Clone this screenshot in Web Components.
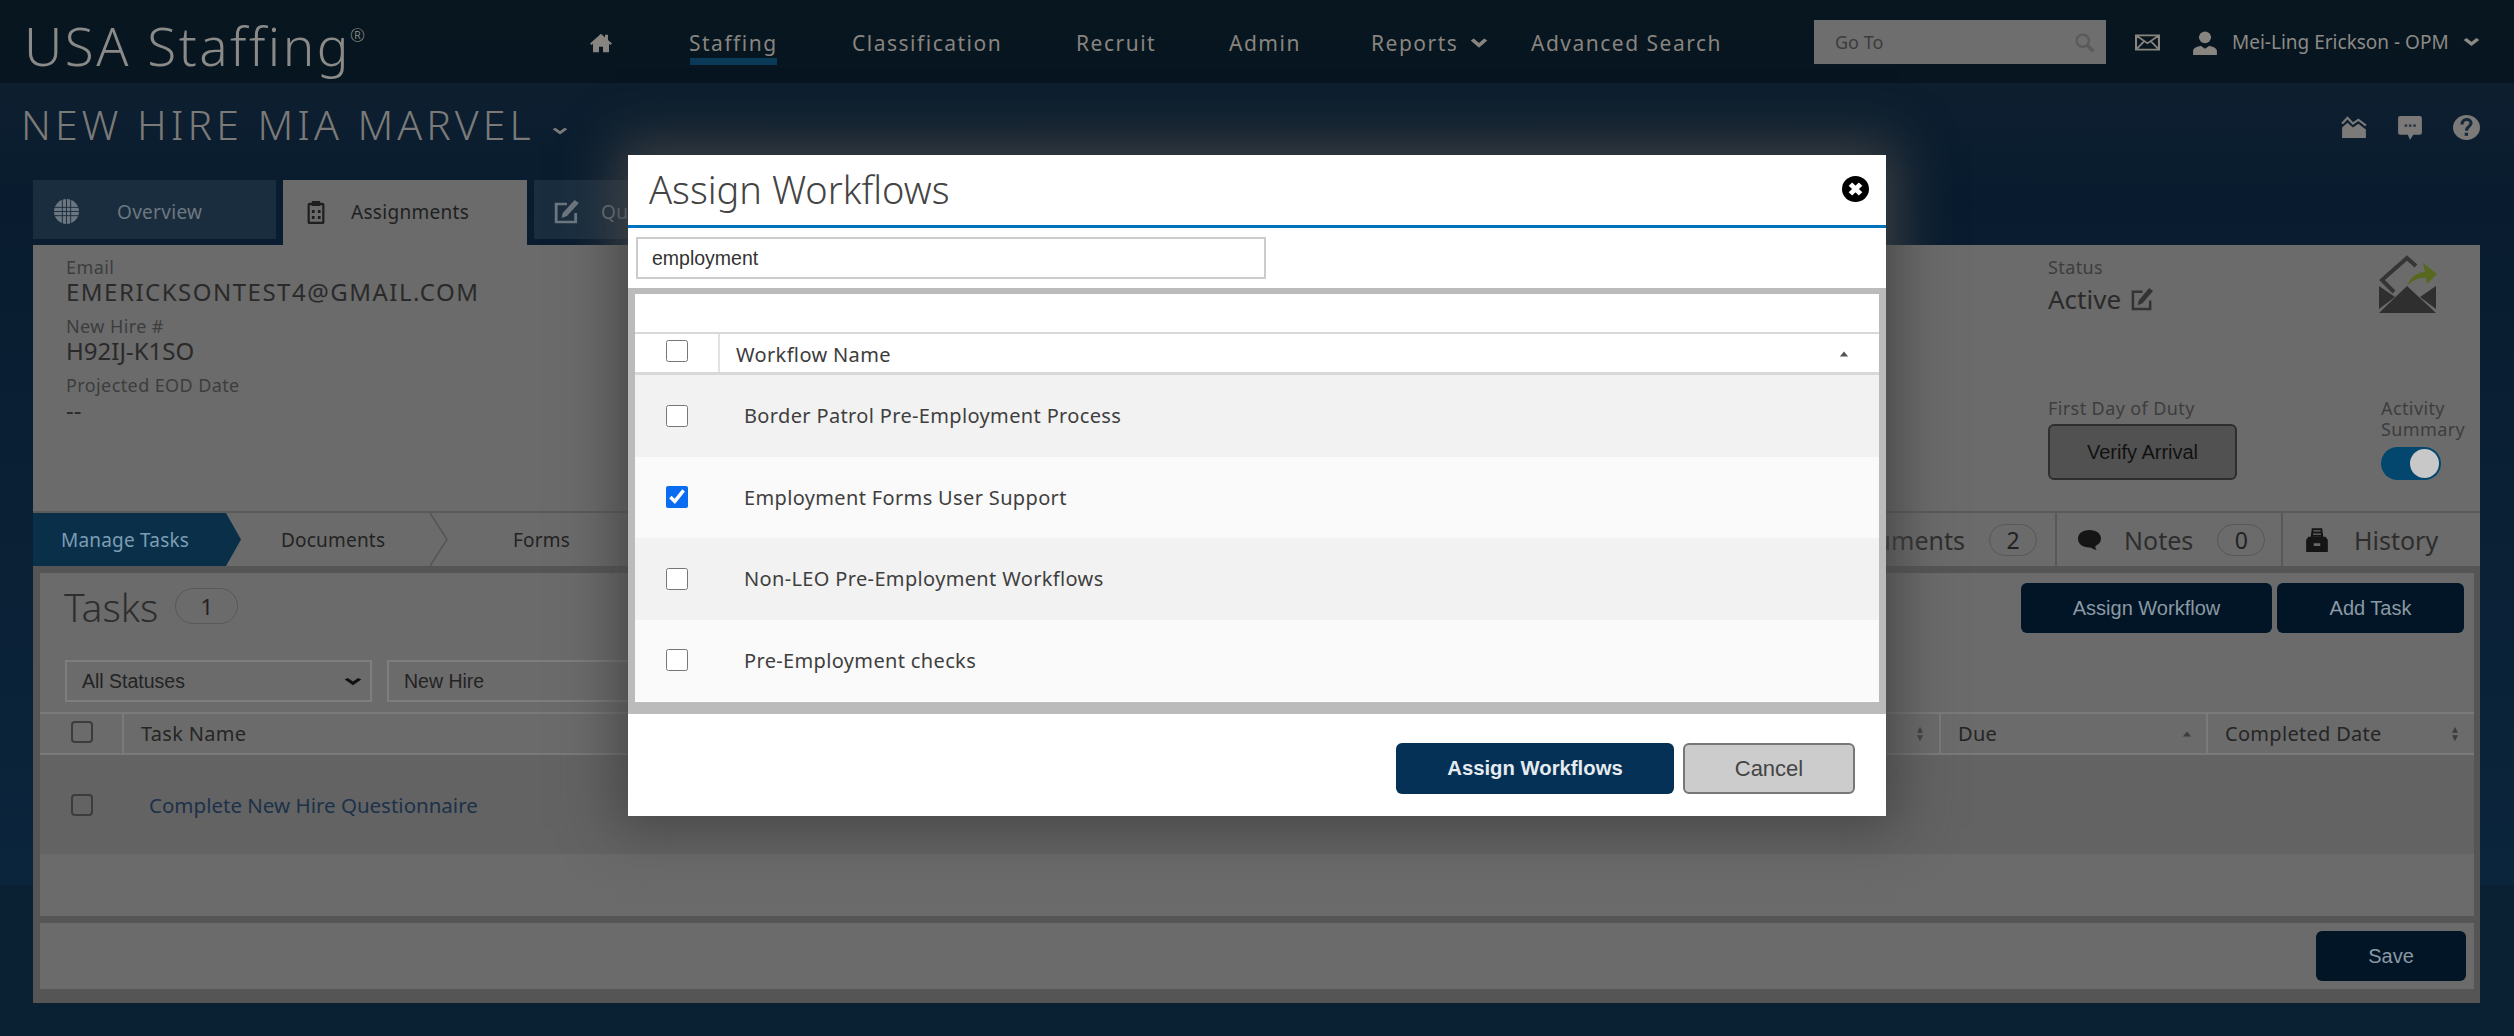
<!doctype html>
<html>
<head>
<meta charset="utf-8">
<title>USA Staffing</title>
<style>
  html, body { margin: 0; padding: 0; }
  body {
    width: 2514px;
    height: 1036px;
    overflow: hidden;
    position: relative;
    font-family: "Noto Sans", "Open Sans", sans-serif;
    background: linear-gradient(#0d1f2f 83px, #091c2f 200px, #0b253c 885px, #0a2033 885px);
  }
</style>
</head>
<body>
  <usa-header></usa-header>
  <hire-title></hire-title>
  <page-tabs></page-tabs>
  <hire-panel></hire-panel>
  <assign-modal></assign-modal>

<script>
const ICONS = {
  home: '<path fill="currentColor" d="M12 2 1 12.5l1.6 1.6L4 12.8V22h6v-6h4v6h6v-9.2l1.4 1.3 1.6-1.6L19 8.7V3h-3v2.9z"/>',
  chev: '<path fill="none" stroke="currentColor" stroke-width="5.500" d="M3 6l9 10 9-10"/>',
  search: '<circle cx="10" cy="10" r="7" fill="none" stroke="currentColor" stroke-width="2.6"/><path stroke="currentColor" stroke-width="4" d="M15 15l7 7"/>',
  mail: '<path fill="none" stroke="currentColor" stroke-width="2" d="M1 3h22v18H1zM1 3l11 10L23 3M1 21l8-11M23 21l-8-11"/>',
  user: '<circle cx="12" cy="7" r="5.6" fill="currentColor"/><path fill="currentColor" d="M1 24v-4c0-3 4-4 7-5l4 3 4-3c3 1 7 2 7 5v4z"/>',
  crown: '<path fill="none" stroke="currentColor" stroke-width="2.2" d="M1 9l5-6 5 6 5-4 7 6"/><path fill="currentColor" d="M1 13l5-5 5 5 5-4 7 6v9H1z"/>',
  comment: '<path fill="currentColor" d="M3 1h18a2 2 0 0 1 2 2v14a2 2 0 0 1-2 2h-6l-3 5-2-5H3a2 2 0 0 1-2-2V3a2 2 0 0 1 2-2z"/><g fill="#2b3a47"><rect x="7" y="9" width="2.4" height="2.4"/><rect x="11" y="9" width="2.4" height="2.4"/><rect x="15" y="9" width="2.4" height="2.4"/></g>',
  help: '<circle cx="12" cy="12" r="12" fill="currentColor"/><path fill="none" stroke="#16293a" stroke-width="2.8" d="M8 9c0-6 8-6 8-1 0 3-4 3-4 7"/><rect x="10.4" y="17" width="3" height="3" fill="#16293a"/>',
  globe: '<circle cx="12" cy="12" r="12" fill="currentColor"/><path fill="none" stroke="#1a2d3e" stroke-width=".9" d="M0 8h24M0 12h24M0 16h24M8 0v24M12 0v24M16 0v24"/>',
  clip: '<path fill="none" stroke="currentColor" stroke-width="2.4" d="M5 4h14a1 1 0 0 1 1 1v17a1 1 0 0 1-1 1H5a1 1 0 0 1-1-1V5a1 1 0 0 1 1-1z"/><rect x="7.500" y="1" width="9" height="5" fill="currentColor"/><g fill="currentColor"><rect x="7.500" y="10" width="3" height="3"/><rect x="14" y="10" width="3" height="3"/><rect x="7.500" y="16" width="3" height="3"/><rect x="14" y="16" width="3" height="3"/></g>',
  edit: '<path fill="none" stroke="currentColor" stroke-width="2.6" d="M20 13v9H2V4h10"/><path fill="currentColor" d="M19 0l4 3-11 13-5 2 1-5z"/>',
  note: '<path fill="currentColor" d="M12 1C5 1 1 5 1 11c0 6 4 10 11 10 2 0 3 2 7 3-1-2-2-3-1-5 3-2 5-4 5-8 0-6-4-10-11-10z"/>',
  archive: '<path fill="none" stroke="currentColor" stroke-width="1.8" d="M7 10l1-8h8l1 8M8.500 5h7M8 8h8"/><path fill="currentColor" d="M4 9h16l2 3v11H2V12z"/><rect x="9" y="15" width="6" height="2.500" fill="#6b6b6b"/>',
  close: '<circle cx="12" cy="12" r="12" fill="#000"/><path stroke="#fff" stroke-width="4.400" d="M7.500 7.500l9 9M16.500 7.500l-9 9"/>',
  up: '<path fill="currentColor" d="M12 2l10 20H2z"/>',
  both: '<path fill="currentColor" d="M12 1l7 9H5zM12 23l7-9H5z"/>'
}

class UiIcon extends HTMLElement {
  connectedCallback() {
    const size = this.getAttribute('size') || 24
    const h = this.getAttribute('h') || size
    this.attachShadow({ mode: 'open' }).innerHTML = `
      <style>
        :host { display: inline-flex; flex: none; width: ${size}px; height: ${h}px; }
        svg { width: 100%; height: 100%; display: block; }
      </style>
      <svg viewBox="0 0 24 24" preserveAspectRatio="none">${ICONS[this.getAttribute('name')]}</svg>`
  }
}
customElements.define('ui-icon', UiIcon)

class UsaHeader extends HTMLElement {
  constructor() {
    super()
    this.attachShadow({ mode: 'open' }).innerHTML = `
      <style>
        :host {
          display: grid;
          height: 83px;
          align-items: center;
          grid-template-columns: 589px 100px 163px 224px 153px 142px 160px 283px 321px 57px 40px 1fr;
          background: linear-gradient(#07161f, #06151f);
          color: #88847f;
          font-size: 21px;
          letter-spacing: 1.500px;
        }
        .logo { padding-left: 24px; font-size: 53px; font-weight: 300; color: #8a8a88; letter-spacing: 2.500px; line-height: 83px; margin-top: 4px; white-space: nowrap; }
        .logo sup { font-size: 18px; vertical-align: 24px; line-height: 0; letter-spacing: 0; margin-left: -1px; }
        .item { line-height: 30px; margin-top: -2px; display: flex; align-items: center; gap: 12px; white-space: nowrap; }
        .current { width: max-content; box-shadow: 0 8px 0 -1px #0a3a57; }
        .goto {
          width: 292px; height: 44px; box-sizing: border-box; margin-top: -3px;
          padding: 0 11px 0 21px; background: #6e6e6e; color: #3c3c3c;
          display: flex; align-items: center; justify-content: space-between;
          font-size: 18px; letter-spacing: 0;
        }
        .name { font-size: 19px; letter-spacing: 0; color: #8d8a86; display: flex; gap: 14px; align-items: center; margin-top: -3px; }
        .mail, .user { display: flex; margin-top: -2px; }
      </style>
      <div class="logo">USA Staffing<sup>®</sup></div>
      <div class="item"><ui-icon name="home" size="24" h="22"></ui-icon></div>
      <div class="item"><span class="current">Staffing</span></div>
      <div class="item">Classification</div>
      <div class="item">Recruit</div>
      <div class="item">Admin</div>
      <div class="item">Reports <ui-icon name="chev" size="18" h="14"></ui-icon></div>
      <div class="item">Advanced Search</div>
      <div class="goto">Go To <ui-icon name="search" size="21" h="21" style="color:#5a5a5a"></ui-icon></div>
      <div class="mail"><ui-icon name="mail" size="25" h="19"></ui-icon></div>
      <div class="user"><ui-icon name="user" size="26" h="25"></ui-icon></div>
      <div class="item name">Mei-Ling Erickson - OPM <ui-icon name="chev" size="17" h="12"></ui-icon></div>`
  }
}
customElements.define('usa-header', UsaHeader)

class HireTitle extends HTMLElement {
  constructor() {
    super()
    this.attachShadow({ mode: 'open' }).innerHTML = `
      <style>
        :host {
          display: flex;
          height: 97px;
          box-sizing: border-box;
          padding: 0 34px 0 21px;
          align-items: flex-start;
          color: #7b7a78;
        }
        h1 { margin: 16px 0 0; font-size: 41px; line-height: 50px; font-weight: 300; letter-spacing: 4px; white-space: nowrap; }
        .caret { margin: 43px 0 0 17px; }
        .tools { margin: 32px 0 0 auto; display: flex; gap: 30px; }
      </style>
      <h1>NEW HIRE MIA MARVEL</h1>
      <ui-icon class="caret" name="chev" size="16" h="10"></ui-icon>
      <div class="tools">
        <ui-icon name="crown" size="26" h="23"></ui-icon>
        <ui-icon name="comment" size="26" h="25"></ui-icon>
        <ui-icon name="help" size="27" h="25"></ui-icon>
      </div>`
  }
}
customElements.define('hire-title', HireTitle)

class TabLink extends HTMLElement {
  constructor() {
    super()
    this.attachShadow({ mode: 'open' }).innerHTML = `
      <style>
        :host {
          display: flex;
          align-items: center;
          box-sizing: border-box;
          height: 59px;
          padding-top: 4px;
          background: #1a2d3e;
          color: #6d7780;
          font-size: 19px;
          letter-spacing: .3px;
          white-space: nowrap;
          overflow: hidden;
        }
        :host([active]) { height: 65px; padding-bottom: 5px; background: #6b6b6b; color: #1f1f1f; }
      </style>
      <slot></slot>`
  }
}
customElements.define('tab-link', TabLink)

class PageTabs extends HTMLElement {
  constructor() {
    super()
    this.attachShadow({ mode: 'open' }).innerHTML = `
      <style>
        :host { display: flex; height: 65px; padding-left: 33px; gap: 7px; align-items: flex-start; }
      </style>
      <tab-link style="width:243px;padding-left:21px;gap:38px"><ui-icon name="globe" size="25" h="25" style="color:#6b7680"></ui-icon><span>Overview</span></tab-link>
      <tab-link active style="width:244px;padding-left:22px;gap:24px"><ui-icon name="clip" size="22" h="24"></ui-icon><span>Assignments</span></tab-link>
      <tab-link style="width:95px;padding-left:20px;gap:21px"><ui-icon name="edit" size="26" h="24"></ui-icon><span>Qu</span></tab-link>`
  }
}
customElements.define('page-tabs', PageTabs)

class LabelValue extends HTMLElement {
  constructor() {
    super()
    this.attachShadow({ mode: 'open' }).innerHTML = `
      <style>
        :host { display: block; height: 59px; color: #2a2a2a; }
        .l { font-size: 18px; letter-spacing: .4px; line-height: 24px; color: #3d3d3d; white-space: nowrap; }
        .v { font-size: var(--v-size, 24px); letter-spacing: var(--v-ls, 0); line-height: 35px; display: flex; gap: 10px; align-items: center; white-space: nowrap; margin-top: var(--v-top, -5px); }
      </style>
      <div class="l"><slot name="label"></slot></div>
      <div class="v"><slot></slot></div>`
  }
}
customElements.define('label-value', LabelValue)

class HireSummary extends HTMLElement {
  constructor() {
    super()
    this.attachShadow({ mode: 'open' }).innerHTML = `
      <style>
        :host {
          display: flex;
          justify-content: space-between;
          height: 268px;
          box-sizing: border-box;
          padding: 10px 0 0 33px;
          background: #6b6b6b;
          border-bottom: 2px solid #5a5a5a;
        }
        .side { width: 432px; display: grid; grid-template-columns: 333px 99px; grid-template-rows: 143px 1fr; }
        .small { font-size: 18px; letter-spacing: .4px; line-height: 21px; color: #3d3d3d; white-space: nowrap; }
        .verify {
          width: 189px; height: 56px; box-sizing: border-box; margin-top: 5px;
          display: flex; align-items: center; justify-content: center;
          background: #515151; border: 2px solid #2e2e2e; border-radius: 6px;
          font: 20px "Liberation Sans", Arial, sans-serif; color: #111;
        }
        .toggle {
          width: 60px; height: 33px; box-sizing: border-box; margin-top: 7px; padding: 2px 0 2px 29px;
          background: #04476e; border-radius: 17px;
        }
        .knob { width: 29px; height: 29px; border-radius: 50%; background: #c8c8c8; }
        .mailicon { margin: 0 0 0 -2px; display: block; }
      </style>
      <div>
        <label-value style="--v-ls:1.500px"><span slot="label">Email</span>EMERICKSONTEST4@GMAIL.COM</label-value>
        <label-value><span slot="label">New Hire #</span>H92IJ-K1SO</label-value>
        <label-value><span slot="label">Projected EOD Date</span>--</label-value>
      </div>
      <div class="side">
        <label-value style="--v-top:3px;--v-size:26px"><span slot="label">Status</span>Active <ui-icon name="edit" size="23" h="23" style="color:#333"></ui-icon></label-value>
        <svg class="mailicon" width="58" height="59" viewBox="0 0 58 59">
          <path fill="none" stroke="#353535" stroke-width="4" d="M15 37 3 25 28 3l9 8"/>
          <path fill="#2f2f2f" d="M28 31 57 58H0zM0 31l16 11L0 54zM57 31 41 42l16 12z"/>
          <path fill="#56691f" d="M28 31c3-9 11-14 18-14l-2-9 14 11-10 10-1-6c-7-1-13 2-19 8z"/>
        </svg>
        <div>
          <div class="small">First Day of Duty</div>
          <div class="verify">Verify Arrival</div>
        </div>
        <div>
          <div class="small">Activity<br>Summary</div>
          <div class="toggle"><div class="knob"></div></div>
        </div>
      </div>`
  }
}
customElements.define('hire-summary', HireSummary)

class CountBadge extends HTMLElement {
  constructor() {
    super()
    this.attachShadow({ mode: 'open' }).innerHTML = `
      <style>
        :host {
          display: inline-flex; align-items: center; justify-content: center; flex: none;
          width: 48px; height: 32px; box-sizing: border-box;
          border: 1.500px solid #585858; border-radius: 16px;
          font-size: 23px; color: #222;
        }
      </style>
      <slot></slot>`
  }
}
customElements.define('count-badge', CountBadge)

class StepBar extends HTMLElement {
  constructor() {
    super()
    this.attachShadow({ mode: 'open' }).innerHTML = `
      <style>
        :host { display: flex; height: 53px; background: #6b6b6b; color: #232323; font-size: 19px; letter-spacing: .2px; white-space: nowrap; }
        .first {
          width: 208px; box-sizing: border-box; padding-left: 28px;
          display: flex; align-items: center;
          background: #0a3049; color: #7c9db5;
          clip-path: polygon(0 0, 193px 0, 100% 50%, 193px 100%, 0 100%);
        }
        .step { display: flex; align-items: center; width: 207px; box-sizing: border-box; padding-left: 40px; justify-content: space-between; }
        .step svg { flex: none; }
        .spacer { flex: 1; }
        .side {
          display: flex; align-items: center; box-sizing: border-box; gap: 24px;
          border-left: 2px solid #585858; font-size: 25px; letter-spacing: 0; color: #2d2d2d;
        }
      </style>
      <div class="first">Manage Tasks</div>
      <div class="step">Documents
        <svg width="19" height="53" viewBox="0 0 19 53"><path fill="none" stroke="#555" stroke-width="1.500" d="M1 0l17 26.500L1 53"/></svg>
      </div>
      <div class="step" style="padding-left:65px;width:226px">Forms</div>
      <div class="spacer"></div>
      <div class="side" style="border:0;padding-right:18px">Documents <count-badge>2</count-badge></div>
      <div class="side" style="width:226px;padding-left:20px"><ui-icon name="note" size="25" h="21" style="color:#151515;margin-right:-2px"></ui-icon>Notes <count-badge>0</count-badge></div>
      <div class="side" style="width:199px;padding-left:21px"><ui-icon name="archive" size="26" h="26" style="color:#151515"></ui-icon>History</div>`
  }
}
customElements.define('step-bar', StepBar)

class DarkButton extends HTMLElement {
  constructor() {
    super()
    this.attachShadow({ mode: 'open' }).innerHTML = `
      <style>
        :host {
          display: inline-flex; align-items: center; justify-content: center; box-sizing: border-box;
          height: 50px; background: #011526; border-radius: 6px; color: #8b99a4;
          font: 20px "Liberation Sans", Arial, sans-serif; white-space: nowrap;
        }
      </style>
      <slot></slot>`
  }
}
customElements.define('dark-button', DarkButton)

class TaskTable extends HTMLElement {
  constructor() {
    super()
    this.attachShadow({ mode: 'open' }).innerHTML = `
      <style>
        :host { display: block; background: #6b6b6b; height: 343px; color: #2a2a2a; }
        .top { display: flex; height: 87px; box-sizing: border-box; padding: 10px 10px 0 24px; gap: 5px; }
        h2 { margin: -1px auto 0 0; font-size: 39px; font-weight: 300; line-height: 50px; color: #2e2e2e; display: flex; gap: 17px; }
        h2 count-badge { width: 63px; height: 36px; border-radius: 18px; font-size: 22px; font-weight: 400; margin-top: 6px; }
        .filters { display: flex; height: 52px; padding-left: 25px; gap: 15px; font: 19.500px "Liberation Sans", Arial, sans-serif; color: #232323; }
        .sel {
          height: 42px; box-sizing: border-box; border: 2px solid #7e7e7e; padding: 0 8px 0 15px;
          display: flex; align-items: center; justify-content: space-between;
        }
        .head {
          display: grid; grid-template-columns: 82px 1817px 267px 268px; height: 43px; box-sizing: border-box;
          border-top: 2px solid #7a7a7a; border-bottom: 2px solid #7a7a7a;
          font-size: 20px; letter-spacing: .3px; color: #252525;
        }
        .head > div { display: flex; align-items: center; justify-content: space-between; padding: 0 14px 0 17px; border-left: 2px solid #7a7a7a; }
        .head > div:first-child { border: 0; padding: 0 0 3px 31px; }
        .row { display: flex; align-items: center; height: 99px; background: #636363; padding-left: 31px; font-size: 20.500px; color: #1c3149; gap: 56px; }
        .box { width: 22px; height: 22px; box-sizing: border-box; border: 2px solid #3c3c3c; border-radius: 4px; }
        .sort { color: #3d3d3d; }
      </style>
      <div class="top">
        <h2>Tasks <count-badge>1</count-badge></h2>
        <dark-button style="width:251px">Assign Workflow</dark-button>
        <dark-button style="width:187px">Add Task</dark-button>
      </div>
      <div class="filters">
        <div class="sel" style="width:307px">All Statuses <ui-icon name="chev" size="18" h="11" style="color:#111"></ui-icon></div>
        <div class="sel" style="width:400px">New Hire</div>
      </div>
      <div class="head">
        <div><div class="box"></div></div>
        <div>Task Name <ui-icon class="sort" name="both" size="10" h="16"></ui-icon></div>
        <div>Due <ui-icon class="sort" name="up" size="10" h="6"></ui-icon></div>
        <div>Completed Date <ui-icon class="sort" name="both" size="10" h="16"></ui-icon></div>
      </div>
      <div class="row"><div class="box"></div><span>Complete New Hire Questionnaire</span></div>`
  }
}
customElements.define('task-table', TaskTable)

class HirePanel extends HTMLElement {
  constructor() {
    super()
    this.attachShadow({ mode: 'open' }).innerHTML = `
      <style>
        :host { display: block; margin: 0 34px 0 33px; height: 758px; background: #555; }
        .body { padding: 7px 6px 0 7px; }
        .save {
          margin-top: 7px; height: 66px; box-sizing: border-box; padding: 8px 8px 0 0;
          display: flex; justify-content: flex-end; background: #6b6b6b;
        }
      </style>
      <hire-summary></hire-summary>
      <step-bar></step-bar>
      <div class="body">
        <task-table></task-table>
        <div class="save"><dark-button style="width:150px">Save</dark-button></div>
      </div>`
  }
}
customElements.define('hire-panel', HirePanel)

class WorkflowRow extends HTMLElement {
  constructor() {
    super()
    this.attachShadow({ mode: 'open' }).innerHTML = `
      <style>
        :host {
          display: flex; align-items: center; height: 81.500px; box-sizing: border-box;
          padding-left: 31px; background: #f2f2f2; gap: 56px;
          font-size: 20px; letter-spacing: .35px; color: #3f3f3f;
        }
        :host(:nth-child(even)) { background: #fafafa; }
        input { width: 22px; height: 22px; margin: 0; flex: none; accent-color: #0a6cf0; }
      </style>
      <input type="checkbox">
      <slot></slot>`
  }
  connectedCallback() {
    this.shadowRoot.querySelector('input').checked = this.hasAttribute('checked')
  }
}
customElements.define('workflow-row', WorkflowRow)

class AssignModal extends HTMLElement {
  constructor() {
    super()
    this.attachShadow({ mode: 'open' }).innerHTML = `
      <style>
        :host {
          position: absolute; left: 628px; top: 155px; width: 1258px; height: 661px;
          background: #fff; box-shadow: 0 0 50px 12px rgba(68,68,68,.9); color: #444;
        }
        .title {
          display: flex; align-items: center; justify-content: space-between;
          height: 73px; box-sizing: border-box; padding: 0 17px 2px 21px;
          border-bottom: 3px solid #0071bc;
        }
        .title h2 { margin: 0; font-size: 38px; font-weight: 300; color: #444; }
        .search { padding: 9px 8px; height: 60px; box-sizing: border-box; }
        .input {
          width: 630px; height: 42px; box-sizing: border-box; padding-left: 14px;
          border: 2px solid #ccc; display: flex; align-items: center;
          font: 19.500px "Liberation Sans", Arial, sans-serif; color: #333;
        }
        .frame { background: #bbb; padding: 6px 7px 12px; height: 426px; box-sizing: border-box; }
        .inner { background: #fff; height: 408px; }
        .gap { height: 38px; }
        .head {
          display: grid; grid-template-columns: 83px 1fr; height: 43px; box-sizing: border-box;
          border-top: 2px solid #d8d8d8; border-bottom: 3px solid #d8d8d8;
          font-size: 20px; letter-spacing: .35px; color: #3c3c3c;
        }
        .head > div { display: flex; align-items: center; }
        .head > div:first-child { padding: 0 0 5px 31px; }
        .head > div:last-child { border-left: 2px solid #e2e2e2; padding: 2px 30px 0 16px; justify-content: space-between; }
        input { width: 22px; height: 22px; margin: 0; }
        .rows { height: 326px; }
        .foot { display: flex; justify-content: flex-end; padding: 29px 31px 0 0; gap: 9px; }
        .btn {
          height: 51px; box-sizing: border-box; display: flex; align-items: center; justify-content: center;
          border-radius: 6px; font: 20.300px "Liberation Sans", Arial, sans-serif;
        }
        .go { width: 278px; background: #053156; color: #e6ebef; font-weight: bold; }
        .no { width: 172px; background: #ccc; border: 2px solid #777; color: #444; font-size: 22px; }
      </style>
      <div class="title"><h2>Assign Workflows</h2><ui-icon name="close" size="27" h="26"></ui-icon></div>
      <div class="search"><div class="input">employment</div></div>
      <div class="frame">
        <div class="inner">
          <div class="gap"></div>
          <div class="head">
            <div><input type="checkbox"></div>
            <div>Workflow Name <ui-icon name="up" size="10" h="6" style="color:#555"></ui-icon></div>
          </div>
          <div class="rows">
            <workflow-row>Border Patrol Pre-Employment Process</workflow-row>
            <workflow-row checked>Employment Forms User Support</workflow-row>
            <workflow-row>Non-LEO Pre-Employment Workflows</workflow-row>
            <workflow-row>Pre-Employment checks</workflow-row>
          </div>
        </div>
      </div>
      <div class="foot">
        <div class="btn go">Assign Workflows</div>
        <div class="btn no">Cancel</div>
      </div>`
  }
}
customElements.define('assign-modal', AssignModal)
</script>
</body>
</html>
